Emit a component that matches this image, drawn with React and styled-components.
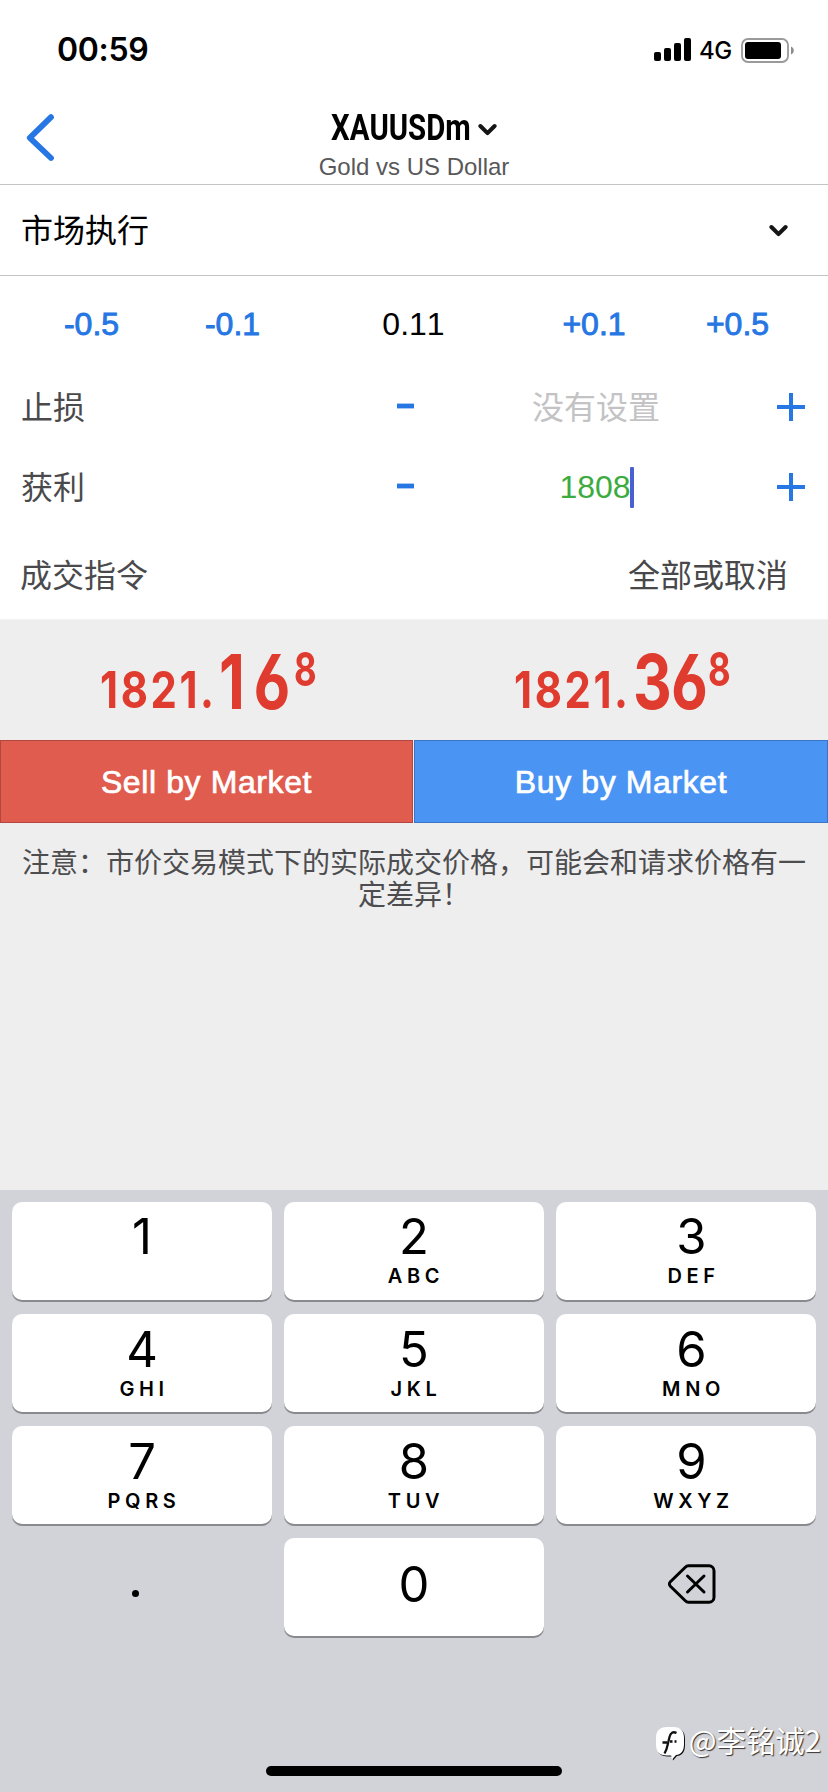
import styled, { createGlobalStyle, css } from "styled-components";

const GlobalStyle = createGlobalStyle`
  * {
    box-sizing: border-box;
  }
  body {
    margin: 0;
    background: #fff;
  }
`;

const sans = `"Liberation Sans", "Noto Sans CJK SC", sans-serif`;
const blue = "#2676e3";

const Screen = styled.div`
  width: 828px;
  height: 1792px;
  display: flex;
  flex-direction: column;
  overflow: hidden;
  background: #fff;
  color: #000;
  font-family: ${sans};
  font-size: 32px;
  font-kerning: none;
  line-height: 1;
  white-space: nowrap;
`;

const StatusBar = styled.div`
  height: 100px;
  flex: none;
  display: flex;
  align-items: center;
  justify-content: space-between;
  padding: 0 34px 0 57px;
  font-family: Inter, sans-serif;
`;

const Time = styled.span`
  font-size: 32px;
  font-weight: 600;
  font-kerning: normal;
  letter-spacing: -0.3px;
`;

const StatusIcons = styled.div`
  display: flex;
  align-items: center;
`;

const Network = styled.span`
  width: 33px;
  margin: 2px 9px 0 8px;
  font-size: 24px;
  font-weight: 500;
  letter-spacing: -0.4px;
`;

const Header = styled.header`
  height: 85px;
  flex: none;
  display: grid;
  grid-template-columns: 100px 1fr 100px;
  border-bottom: 1px solid #c4c4c6;
`;

const BackButton = styled.div`
  padding: 13px 0 0 26px;
`;

const HeaderTitle = styled.div`
  display: flex;
  flex-direction: column;
  align-items: center;
`;

const SymbolRow = styled.div`
  display: flex;
  align-items: center;
  height: 55px;

  svg {
    margin-top: 4px;
  }
`;

/* Narrow lettering: the box keeps the final width, the glyphs are squeezed. */
const Narrow = styled.span`
  display: inline-block;
  width: ${({ $width }) => $width}px;
  font-family: ${({ $font }) => $font || "Inter"}, sans-serif;
  font-size: ${({ $size }) => $size}px;
  font-weight: 700;
  letter-spacing: ${({ $spacing }) => $spacing || 0}px;
  font-feature-settings: "cv03";
  transform: scaleX(${({ $scale }) => $scale});
  transform-origin: 0 50%;
`;

const Subtitle = styled.span`
  font-size: 24px;
  color: #58585a;
`;

const ExecutionRow = styled.div`
  height: 91px;
  flex: none;
  display: flex;
  align-items: center;
  justify-content: space-between;
  padding: 1px 40px 0 21px;
  border-bottom: 1px solid #c4c4c6;
`;

const VolumeRow = styled.div`
  height: 92px;
  flex: none;
  display: grid;
  grid-template-columns: 161px 121px 241px 120px 167px;
  padding: 4px 7px 0 11px;
  align-items: center;
  text-align: center;
`;

const Step = styled.span`
  color: ${blue};
  -webkit-text-stroke: 0.9px currentColor;
`;

const LevelRow = styled.div`
  height: 80px;
  flex: none;
  display: grid;
  grid-template-columns: 375px 60px 320px 72px;
  align-items: center;
  padding-left: 1px;
`;

const Label = styled.span`
  color: #4a4a4c;
  padding-left: 20px;
`;

const Field = styled.div`
  display: flex;
  justify-content: center;
  align-items: center;
  color: ${({ $filled }) => ($filled ? "#3dab40" : "#c3c3c5")};
  padding: ${({ $filled }) => ($filled ? "0 0 2px 1px" : "0")};
`;

const Caret = styled.i`
  width: 4px;
  height: 41px;
  margin-left: -1px;
  border-radius: 1px;
  background: #4a5fd0;
`;

const FillRow = styled.div`
  height: 92px;
  flex: none;
  display: flex;
  align-items: center;
  justify-content: space-between;
  padding: 4px 40px 0 0;
  color: #48484a;
  border-bottom: 1px solid #f3f3f3;
`;

const TradePanel = styled.section`
  flex: 1;
  background: #eeeeee;
`;

const Prices = styled.div`
  height: 120px;
  display: grid;
  grid-template-columns: 414px 414px;
`;

const Price = styled.div`
  display: flex;
  align-items: flex-start;
  padding-left: 100px;
  color: #df3b2e;
`;

const Part = styled(Narrow)`
  margin-top: ${({ $top }) => $top}px;
`;

const Actions = styled.div`
  height: 83px;
  display: grid;
  grid-template-columns: 413px 414px;
  gap: 1px;
`;

const Action = styled.div`
  display: flex;
  align-items: center;
  justify-content: center;
  color: #fff;
  letter-spacing: 0.6px;
  background: ${({ $side }) => ($side === "sell" ? "#df5c4f" : "#4a94f4")};
  border: 1px solid ${({ $side }) => ($side === "sell" ? "#b4453f" : "#3b73c6")};
  -webkit-text-stroke: 0.7px currentColor;
`;

const Note = styled.p`
  margin: 22px 0 0;
  padding: 0 22px;
  font-family: "Noto Sans CJK SC", sans-serif;
  font-size: 28px;
  line-height: 32px;
  text-align: center;
  color: #4d4d4f;
`;

const Keyboard = styled.section`
  height: 602px;
  flex: none;
  display: flex;
  flex-direction: column;
  align-items: center;
  padding-top: 12px;
  background: #d2d3d9;
`;

const Keys = styled.div`
  display: grid;
  grid-template-columns: repeat(3, 260px);
  grid-auto-rows: 98px;
  gap: 14px 12px;
`;

const Key = styled.div`
  display: flex;
  flex-direction: column;
  align-items: center;
  padding-top: ${({ $top }) => $top}px;
  border-radius: 10px;
  font-family: Inter, sans-serif;

  &:nth-child(3n) {
    padding-left: 11px;
  }
  ${({ $plain }) =>
    !$plain &&
    css`
      background: #fff;
      box-shadow: 0 2px 0 #898a8e;
    `}
`;

const Digit = styled.span`
  font-size: 49px;
  line-height: 50px;
`;

const Letters = styled.span`
  margin-top: 4px;
  font-size: 20px;
  line-height: 20px;
  font-weight: 600;
  letter-spacing: 4.6px;
  padding-left: 4px;
`;

const Dot = styled.i`
  width: 7px;
  height: 7px;
  margin-right: 13px;
  border-radius: 50%;
  background: #000;
`;

const Watermark = styled.div`
  align-self: flex-end;
  display: flex;
  align-items: center;
  gap: 3px;
  height: 40px;
  margin: 84px 7px 0 0;
  color: #fff;
  font-family: "Noto Sans CJK SC", sans-serif;
  font-size: 29.4px;
  text-shadow: 1px 1px 1px #333;

  svg {
    margin: 8px 1px 0 0;
    filter: drop-shadow(1.5px 1px 0 #111);
  }
`;

const HomeBar = styled.div`
  width: 296px;
  height: 10px;
  margin-top: 6px;
  border-radius: 5px;
  background: #000;
`;

const keys = [
  ["1", "", 10],
  ["2", "ABC", 10],
  ["3", "DEF", 10],
  ["4", "GHI", 11],
  ["5", "JKL", 11],
  ["6", "MNO", 11],
  ["7", "PQRS", 11],
  ["8", "TUV", 11],
  ["9", "WXYZ", 11],
];

function Chevron() {
  return (
    <svg width="19" height="14" viewBox="0 0 19 14" fill="none">
      <path
        d="M2.4 3l7.1 7.2L16.6 3"
        stroke="#151515"
        strokeWidth="4"
        strokeLinecap="round"
        strokeLinejoin="round"
      />
    </svg>
  );
}

function Minus() {
  return (
    <svg width="18" height="6" viewBox="0 0 18 6">
      <path d="M0 3h17" stroke={blue} strokeWidth="4.8" />
    </svg>
  );
}

function Plus() {
  return (
    <svg width="28" height="28" viewBox="0 0 28 28">
      <path d="M0 14h28M14 0v28" stroke={blue} strokeWidth="4" />
    </svg>
  );
}

const StepMinus = styled.div`
  display: flex;
  padding: 0 0 4px 21px;
`;

const StepPlus = styled.div`
  display: flex;
  padding: 0 0 2px 21px;
`;

function Signal() {
  return (
    <svg width="37" height="24" viewBox="0 0 37 24">
      <rect x="0" y="14" width="7" height="9" rx="2" />
      <rect x="10" y="10" width="7" height="13" rx="2" />
      <rect x="20" y="5" width="7" height="18" rx="2" />
      <rect x="30" y="0" width="7" height="23" rx="2" />
    </svg>
  );
}

function Battery() {
  return (
    <svg width="53" height="25" viewBox="0 0 53 25">
      <rect x="1" y="1" width="46" height="23" rx="6" fill="none" stroke="#9a9a9a" strokeWidth="1.8" />
      <rect x="4" y="4" width="36" height="17" rx="3" />
      <path d="M50 8.5c1.8.8 2.8 2.1 2.8 4s-1 3.200-2.800 4z" fill="#8e8e8e" />
    </svg>
  );
}

function DeleteIcon() {
  return (
    <svg width="48" height="40" viewBox="0 0 48 40" fill="none" stroke="#000" strokeLinecap="round" strokeLinejoin="round">
      <path
        d="M20.5 1.8H41a5 5 0 0 1 5 5v26.4a5 5 0 0 1-5 5H20.5c-1.3 0-2.3-.5-3.2-1.4L2.4 22.3c-1.3-1.3-1.3-3.3 0-4.6L17.3 3.2c.9-.9 1.9-1.4 3.2-1.4z"
        strokeWidth="3"
      />
      <path d="M19.5 12L36 28M36 12L19.5 28" strokeWidth="3" />
    </svg>
  );
}

function WatermarkLogo() {
  return (
    <svg width="29" height="34" viewBox="0 0 29 34">
      <path
        d="M11 0h6.500C25 0 28 4 28 11v6c0 6.500-2.500 10.500-8 11l-4 4.500-.8-4H11C3.500 28.500 0 25 0 17v-6C0 4 3.500 0 11 0z"
        fill="#fff"
      />
      <path
        d="M20.500 6c-3.500-1.800-6-.3-7 4l-1.900 8c-.7 3.500-1.500 6-3.100 8.500M6.500 15.500h4.500M14 14.500h2.500M18.500 14.500h2"
        fill="none"
        stroke="#111"
        strokeWidth="2.3"
      />
    </svg>
  );
}

function PriceTag({ cents, spacing }) {
  return (
    <Price>
      <Part $size={51} $width={119} $scale={0.82} $spacing={3.2} $top={44}>
        1821.
      </Part>
      <Part $size={76} $width={75} $scale={0.79} $spacing={spacing} $top={23}>
        {cents}
      </Part>
      <Part $size={47} $width={25} $scale={0.74} $top={25}>
        8
      </Part>
    </Price>
  );
}

function Level({ label, children, filled }) {
  return (
    <LevelRow>
      <Label>{label}</Label>
      <StepMinus>
        <Minus />
      </StepMinus>
      <Field $filled={filled}>{children}</Field>
      <StepPlus>
        <Plus />
      </StepPlus>
    </LevelRow>
  );
}

export default function App() {
  return (
    <Screen>
      <GlobalStyle />
      <StatusBar>
        <Time>00:59</Time>
        <StatusIcons>
          <Signal />
          <Network>4G</Network>
          <Battery />
        </StatusIcons>
      </StatusBar>
      <Header>
        <BackButton>
          <svg width="30" height="50" viewBox="0 0 30 50" fill="none">
            <path d="M25 4.2L3.8 24.8 25 45" stroke={blue} strokeWidth="5.8" strokeLinecap="round" strokeLinejoin="round" />
          </svg>
        </BackButton>
        <HeaderTitle>
          <SymbolRow>
            <Narrow $font="Roboto" $size={36} $width={147} $scale={0.816}>
              XAUUSDm
            </Narrow>
            <Chevron />
          </SymbolRow>
          <Subtitle>Gold vs US Dollar</Subtitle>
        </HeaderTitle>
      </Header>
      <ExecutionRow>
        <span>市场执行</span>
        <Chevron />
      </ExecutionRow>
      <VolumeRow>
        <Step>-0.5</Step>
        <Step>-0.1</Step>
        <span>0.11</span>
        <Step>+0.1</Step>
        <Step>+0.5</Step>
      </VolumeRow>
      <Level label="止损">没有设置</Level>
      <Level label="获利" filled>
        1808
        <Caret />
      </Level>
      <FillRow>
        <Label>成交指令</Label>
        <span>全部或取消</span>
      </FillRow>
      <TradePanel>
        <Prices>
          <PriceTag cents="16" spacing={11} />
          <PriceTag cents="36" spacing={-1} />
        </Prices>
        <Actions>
          <Action $side="sell">Sell by Market</Action>
          <Action $side="buy">Buy by Market</Action>
        </Actions>
        <Note>
          注意：市价交易模式下的实际成交价格，可能会和请求价格有一
          <br />
          定差异！
        </Note>
      </TradePanel>
      <Keyboard>
        <Keys>
          {keys.map(([digit, letters, top]) => (
            <Key key={digit} $top={top}>
              <Digit>{digit}</Digit>
              <Letters>{letters}</Letters>
            </Key>
          ))}
          <Key $plain $top={52}>
            <Dot />
          </Key>
          <Key $top={22}>
            <Digit>0</Digit>
          </Key>
          <Key $plain $top={26}>
            <DeleteIcon />
          </Key>
        </Keys>
        <Watermark>
          <WatermarkLogo />
          @李铭诚2
        </Watermark>
        <HomeBar />
      </Keyboard>
    </Screen>
  );
}
